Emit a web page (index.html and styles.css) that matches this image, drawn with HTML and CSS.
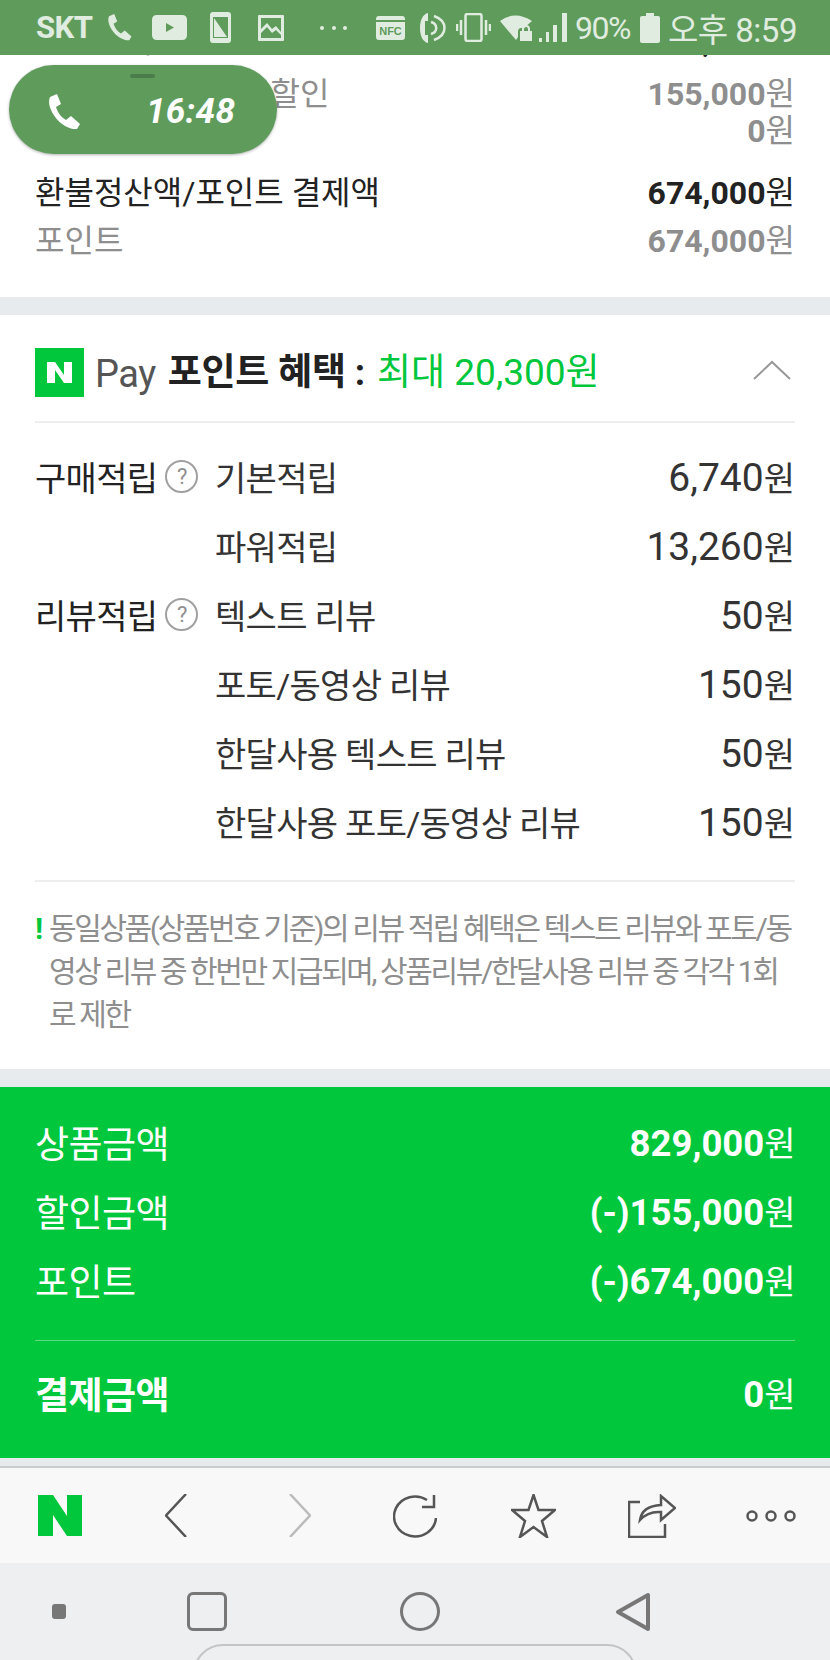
FILE: index.html
```html
<!DOCTYPE html>
<html lang="ko">
  <head>
    <meta charset="UTF-8" />
    <title>포인트 혜택</title>
    <link rel="stylesheet" href="styles.css">
  </head>
  <body>
    <div class="phone">
      <div class="status-bar">
        <span class="carrier">SKT</span>
        <svg class="ic-call" width="27" height="27" viewBox="0 0 34 36"><path d="M3 3L10 0L14 10L9 13C11 19 14 23 19 26L24 22L33 30L30 35C14 36 -2 14 3 3Z" /></svg>
        <svg class="ic-yt" width="35" height="25" viewBox="0 0 35 25"><path fill-rule="evenodd" d="M5 0H30Q35 0 35 5V20Q35 25 30 25H5Q0 25 0 20V5Q0 0 5 0ZM14 8V17L22 12.5Z" /></svg>
        <svg class="ic-device" width="21" height="31" viewBox="0 0 21 31"><path fill-rule="evenodd" d="M3 0H18Q21 0 21 3V28Q21 31 18 31H3Q0 31 0 28V3Q0 0 3 0ZM3 5V26H18V5ZM4 6L17 25H4Z" /></svg>
        <svg class="ic-pic" width="26" height="26" viewBox="0 0 26 26"><path fill-rule="evenodd" d="M1 0H25Q26 0 26 1V25Q26 26 25 26H1Q0 26 0 25V1Q0 0 1 0ZM3 3V14L9 8L14 14L18 11L23 17V3ZM3 18V23H23V20L18 15L14 18L9 12Z" /></svg>
        <span class="status-dots"><i></i><i></i><i></i></span>
        <svg class="ic-nfc" width="29" height="24" viewBox="0 0 29 24"><path d="M3 0H26Q29 0 29 3V4H0V3Q0 0 3 0ZM0 6H29V21Q29 24 26 24H3Q0 24 0 21Z" /><text x="14.5" y="19" text-anchor="middle" class="nfc-text">NFC</text></svg>
        <svg class="ic-volume" width="26" height="30" viewBox="0 0 26 30"><path d="M8 0V8H5V22H8V30C3 29 0 23 0 15C0 7 3 1 8 0Z" /><path class="line" d="M11 9C18 11 18 19 11 21M14 3C28 8 28 22 14 27" /></svg>
        <svg class="ic-vibrate" width="35" height="29" viewBox="0 0 35 29"><rect class="line" x="9.5" y="1" width="16" height="27" rx="2" /><path class="line" d="M5 7V22M1 11V18M30 7V22M34 11V18" /></svg>
        <svg class="ic-wifi" width="33" height="26" viewBox="0 0 33 26"><path d="M0 6Q15 -5 32 6L24 13H21Q18 13 18 17V22L16 25Z" /><path fill-rule="evenodd" d="M20 16H22V14Q22 10 26 10Q30 10 30 14V16H32V26H20ZM24 16H28V14Q28 12 26 12Q24 12 24 14Z" /></svg>
        <svg class="ic-signal" width="28" height="29" viewBox="0 0 28 29"><path d="M0 25H3V29H0ZM7 19H10V29H7ZM14 12H18V29H14ZM23 0H28V29H23Z" /></svg>
        <span class="battery-pct">90%</span>
        <svg class="ic-battery" width="20" height="30" viewBox="0 0 20 30"><path d="M6 0H14V3H18Q20 3 20 5V28Q20 30 18 30H2Q0 30 0 28V5Q0 3 2 3H6Z" /></svg>
        <span class="clock">오후 8:59</span>
      </div>

      <div class="call-pill">
        <span class="pill-handle"></span>
        <svg width="34" height="36" viewBox="0 0 34 36"><path d="M3 3L10 0L14 10L9 13C11 19 14 23 19 26L24 22L33 30L30 35C14 36 -2 14 3 3Z" /></svg>
        <span class="pill-time">16:48</span>
      </div>

      <section class="summary">
        <div class="sum-row sum-main"><span>상품금액</span><span><b>829,000</b>원</span></div>
        <div class="sum-row sum-sub first-sub"><span>스토어판매자쿠폰할인</span><span><b>155,000</b>원</span></div>
        <div class="sum-row sum-sub"><span>배송비 할인</span><span><b>0</b>원</span></div>
        <div class="sum-row sum-main refund"><span>환불정산액/포인트 결제액</span><span><b>674,000</b>원</span></div>
        <div class="sum-row sum-sub"><span>포인트</span><span><b>674,000</b>원</span></div>
      </section>

      <section class="benefit">
        <div class="benefit-head">
          <svg class="n-logo" width="49" height="49" viewBox="0 0 49 49"><rect width="49" height="49" /><path d="M12 14H20L29 27V14H37V35H29L20 22V35H12Z" /></svg>
          <span class="pay-word">Pay</span>
          <strong class="benefit-title">포인트 혜택 :</strong>
          <span class="benefit-max">최대 20,300원</span>
          <svg class="benefit-arrow" width="38" height="20" viewBox="0 0 38 20"><path d="M1 19L19 2L37 19" /></svg>
        </div>
        <div class="benefit-list">
          <div class="b-row"><span class="b-group">구매적립<span class="help">?</span></span><span class="b-name">기본적립</span><span class="b-val"><span class="b-num">6,740</span>원</span></div>
          <div class="b-row"><span class="b-group"></span><span class="b-name">파워적립</span><span class="b-val"><span class="b-num">13,260</span>원</span></div>
          <div class="b-row"><span class="b-group">리뷰적립<span class="help">?</span></span><span class="b-name">텍스트 리뷰</span><span class="b-val"><span class="b-num">50</span>원</span></div>
          <div class="b-row"><span class="b-group"></span><span class="b-name">포토/동영상 리뷰</span><span class="b-val"><span class="b-num">150</span>원</span></div>
          <div class="b-row"><span class="b-group"></span><span class="b-name">한달사용 텍스트 리뷰</span><span class="b-val"><span class="b-num">50</span>원</span></div>
          <div class="b-row"><span class="b-group"></span><span class="b-name">한달사용 포토/동영상 리뷰</span><span class="b-val"><span class="b-num">150</span>원</span></div>
        </div>
        <div class="notice">
          <span class="notice-mark">!</span>
          <p>동일상품(상품번호 기준)의 리뷰 적립 혜택은 텍스트 리뷰와 포토/동영상 리뷰 중 한번만 지급되며, 상품리뷰/한달사용 리뷰 중 각각 1회로 제한</p>
        </div>
      </section>

      <section class="total">
        <div class="t-row"><span>상품금액</span><span><b>829,000</b><span class="won">원</span></span></div>
        <div class="t-row"><span>할인금액</span><span><b>(-)155,000</b><span class="won">원</span></span></div>
        <div class="t-row"><span>포인트</span><span><b>(-)674,000</b><span class="won">원</span></span></div>
        <div class="t-row t-pay"><strong>결제금액</strong><span><b>0</b><span class="won">원</span></span></div>
      </section>

      <div class="toolbar">
        <svg width="44" height="41" viewBox="0 0 44 41"><path class="n-mark" d="M0 0H15L29 21V0H44V41H29L15 20V41H0Z" /></svg>
        <svg class="tb-back" width="22" height="43" viewBox="0 0 22 43"><path class="tool" d="M21 0L1 21.5L21 43" /></svg>
        <svg class="tb-next" width="22" height="43" viewBox="0 0 22 43"><path class="tool off" d="M1 0L21 21.5L1 43" /></svg>
        <svg class="tb-reload" width="44" height="44" viewBox="0 0 44 44"><path class="tool" d="M43 24A21 20 0 1 1 34 6M41 1V13H29" /></svg>
        <svg class="tb-star" width="45" height="44" viewBox="0 0 45 44"><path class="tool" d="M22.500 1L27.500 16H44L31 27L36 43L22.500 33L9 43L14 27L1 16H17.500Z" /></svg>
        <svg class="tb-share" width="48" height="44" viewBox="0 0 48 44"><path class="tool" d="M12 8H1V43H37V30M12 26Q14 12 33 11V2L47 14L33 26V18Q20 17 12 26Z" /></svg>
        <svg class="tb-more" width="50" height="14" viewBox="0 0 50 14"><circle class="tool" cx="6" cy="7" r="4.500" /><circle class="tool" cx="25" cy="7" r="4.500" /><circle class="tool" cx="44" cy="7" r="4.500" /></svg>
      </div>

      <div class="nav-bar">
        <span class="nav-dot"></span>
        <span class="nav-recent"></span>
        <span class="nav-home"></span>
        <svg class="nav-back" width="36" height="40" viewBox="0 0 36 40"><path d="M33 3V37L3 20Z" /></svg>
        <span class="nav-pill"></span>
      </div>
    </div>
  </body>
</html>
```

FILE: styles.css
```css
* {
  margin: 0;
  padding: 0;
  box-sizing: border-box;
}
body {
  background-color: #eeeff1;
  font-family: Roboto, "Noto Sans CJK KR", sans-serif;
}
.phone {
  position: relative;
  width: 830px;
  height: 1660px;
  overflow: hidden;
  display: flex;
  flex-direction: column;
}
b {
  font-weight: 700;
}

/* status bar */
.status-bar {
  position: relative;
  z-index: 2;
  flex: none;
  height: 55px;
  padding-left: 36px;
  display: flex;
  align-items: center;
  background-color: #5f9c5c;
  color: #e1ece0;
  font-size: 30px;
  white-space: nowrap;
}
.status-bar svg {
  flex: none;
  fill: #e1ece0;
}
.status-bar svg .line {
  fill: none;
  stroke: #e1ece0;
  stroke-width: 2.500;
}
.carrier {
  width: 56px;
  font-size: 31px;
  font-weight: 700;
  letter-spacing: -0.5px;
}
.ic-call { margin-left: 14px; }
.ic-yt { margin-left: 19px; }
.ic-device { margin-left: 23px; }
.ic-pic { margin-left: 27px; }
.status-dots {
  width: 27px;
  margin-left: 36px;
  display: flex;
  justify-content: space-between;
}
.status-dots i {
  width: 4px;
  height: 4px;
  border-radius: 50%;
  background-color: #e1ece0;
}
.ic-nfc { margin-left: 29px; }
.nfc-text {
  font-family: "Liberation Sans", sans-serif;
  font-size: 11px;
  font-weight: 700;
  fill: #5f9c5c;
}
.ic-volume { margin-left: 15px; }
.ic-vibrate { margin-left: 10px; }
.ic-wifi { margin-left: 9px; }
.ic-signal { margin-left: 6px; margin-top: -1px; }
.battery-pct {
  margin-left: 8px;
  font-size: 32px;
  letter-spacing: -1.500px;
}
.ic-battery { margin-left: 10px; }
.clock {
  margin-left: 8px;
  font-size: 33px;
  letter-spacing: -0.5px;
}

/* floating call timer */
.call-pill {
  position: absolute;
  z-index: 3;
  left: 9px;
  top: 65px;
  width: 268px;
  height: 89px;
  padding-left: 38px;
  display: flex;
  align-items: center;
  gap: 65px;
  border-radius: 45px;
  background-color: #5f9c5c;
  box-shadow: 0 1px 3px rgba(0, 0, 0, 0.3);
}
.call-pill svg {
  fill: #fff;
  margin-top: 4px;
}
.pill-handle {
  position: absolute;
  left: 121px;
  top: 9px;
  width: 25px;
  height: 4px;
  border-radius: 2px;
  background-color: #4a7d49;
}
.pill-time {
  margin-top: 3px;
  color: #fff;
  font-size: 35px;
  font-style: italic;
  font-weight: 700;
  letter-spacing: 0.3px;
}

/* price summary */
.summary {
  flex: none;
  height: 301px;
  margin-top: -41px;
  padding: 0 35px;
  background-color: #fff;
  border-bottom: 18px solid #e8ebee;
  font-size: 32px;
  overflow: hidden;
}
.sum-row {
  display: flex;
  justify-content: space-between;
  align-items: center;
}
.sum-main {
  height: 48px;
  color: #222;
}
.sum-sub {
  height: 37px;
  color: #8e8e8e;
}
.first-sub {
  margin-top: 10px;
}
.refund {
  margin-top: 20px;
  margin-bottom: 5px;
}

/* n pay benefit */
.benefit {
  flex: none;
  height: 772px;
  background-color: #fff;
  border-bottom: 18px solid #e8ebee;
  padding: 33px 35px 0;
}
.benefit-head {
  height: 75px;
  display: flex;
  align-items: flex-start;
  font-size: 37px;
  border-bottom: 2px solid #eee;
  white-space: nowrap;
}
.n-logo {
  flex: none;
  fill: #fff;
}
.n-logo rect {
  fill: #00c73c;
}
.pay-word {
  margin-left: 11px;
  color: #555;
  font-size: 38px;
  line-height: 53px;
  letter-spacing: -0.5px;
}
.benefit-title {
  margin-left: 12px;
  color: #222;
  line-height: 50px;
  letter-spacing: -0.2px;
}
.benefit-max {
  margin-left: 12px;
  color: #00c73c;
  line-height: 50px;
}
.benefit-arrow {
  margin-left: auto;
  margin-top: 12px;
  margin-right: 4px;
  fill: none;
  stroke: #999;
  stroke-width: 2;
}
.benefit-list {
  padding-top: 19px;
  height: 459px;
  border-bottom: 2px solid #eee;
}
.b-row {
  height: 69px;
  display: flex;
  align-items: center;
  font-size: 34px;
  letter-spacing: -0.7px;
  color: #333;
}
.b-group {
  width: 180px;
  flex: none;
  display: flex;
  align-items: center;
  gap: 8px;
  color: #222;
}
.help {
  width: 33px;
  height: 33px;
  display: flex;
  align-items: center;
  justify-content: center;
  border: 2px solid #a0a0a0;
  border-radius: 50%;
  color: #909090;
  font-size: 22px;
}
.b-val {
  margin-left: auto;
  letter-spacing: 0;
}
.b-num {
  font-size: 39px;
}
.notice {
  display: flex;
  padding-top: 25px;
  color: #8e8e8e;
  font-size: 30px;
  line-height: 43px;
  letter-spacing: -2.400px;
}
.notice-mark {
  width: 14px;
  flex: none;
  color: #00c73c;
  font-weight: 700;
}
.notice p {
  width: 748px;
  word-break: break-all;
}

/* green totals */
.total {
  flex: none;
  height: 379px;
  padding: 20px 35px 0;
  background-color: #00c73c;
  border-bottom: 8px solid #e8ebee;
  color: #fff;
  font-size: 37px;
  letter-spacing: -0.5px;
}
.total b {
  font-size: 36.500px;
  letter-spacing: 0;
}
.won {
  font-size: 34px;
}
.t-row {
  height: 69px;
  display: flex;
  justify-content: space-between;
  align-items: center;
}
.t-pay {
  height: 119px;
  margin-top: 26px;
  padding-bottom: 15px;
  border-top: 1px solid rgba(255, 255, 255, 0.35);
}
.t-pay strong {
  font-weight: 700;
}

/* browser toolbar */
.toolbar {
  flex: none;
  height: 97px;
  padding-left: 38px;
  display: flex;
  align-items: center;
  background-color: #f8f8f8;
  border-top: 2px solid #c8cccc;
}
.tb-back { margin-left: 83px; }
.tb-next { margin-left: 102px; }
.tb-reload { margin-left: 82px; }
.tb-star { margin-left: 74px; }
.tb-share { margin-left: 72px; }
.tb-more { margin-left: 70px; }
.n-mark {
  fill: #00c73c;
}
.tool {
  fill: none;
  stroke: #555;
  stroke-width: 2.500;
}
.tool.off {
  stroke: #bbb;
}

/* android nav */
.nav-bar {
  position: relative;
  flex: 1;
  display: flex;
  align-items: flex-start;
  padding: 29px 0 0 52px;
  background-color: #eeeff1;
}
.nav-dot {
  width: 14px;
  height: 15px;
  margin-top: 12px;
  border-radius: 3px;
  background-color: #777;
}
.nav-recent {
  width: 40px;
  height: 39px;
  margin-left: 121px;
  border: 3px solid #777;
  border-radius: 6px;
}
.nav-home {
  width: 40px;
  height: 39px;
  margin-left: 173px;
  border: 3px solid #777;
  border-radius: 50%;
}
.nav-back {
  margin-left: 175px;
  fill: none;
  stroke: #777;
  stroke-width: 4;
  stroke-linejoin: round;
}
.nav-pill {
  position: absolute;
  left: 193px;
  top: 81px;
  width: 444px;
  height: 60px;
  border: 2px solid #c4c4c4;
  border-radius: 30px;
}
```
